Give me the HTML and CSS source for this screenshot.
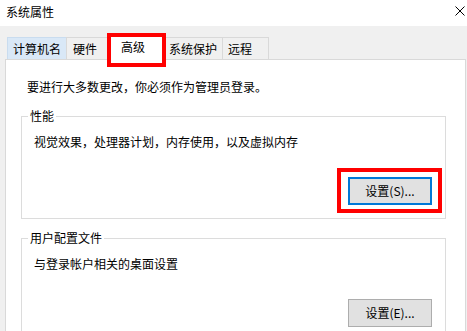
FILE: index.html
```html
<!DOCTYPE html>
<html lang="zh-CN">
<head>
<meta charset="utf-8">
<title>系统属性</title>
<link rel="stylesheet" href="styles.css">
</head>
<body>
<div class="window">
  <div class="titlebar">
    <span class="title">系统属性</span>
    <svg class="close" width="10" height="10" viewBox="0 0 10 10" aria-hidden="true">
      <path d="M0.5 0.5 L9.5 9.5 M9.5 0.5 L0.5 9.5" stroke="#000" stroke-width="1" fill="none"/>
    </svg>
  </div>
  <div class="dialog">
    <div class="tabs">
      <div class="tab tab-hover t1">计算机名</div>
      <div class="tab t2">硬件</div>
      <div class="tab tab-active t3">高级</div>
      <div class="tab t4">系统保护</div>
      <div class="tab t5">远程</div>
    </div>
    <div class="panel">
      <p class="note">要进行大多数更改，你必须作为管理员登录。</p>
      <fieldset class="group group-first">
        <legend>性能</legend>
        <p class="desc">视觉效果，处理器计划，内存使用，以及虚拟内存</p>
        <div class="actions">
          <button class="btn btn-focus btn-marked" type="button">设置(S)...</button>
        </div>
      </fieldset>
      <fieldset class="group">
        <legend>用户配置文件</legend>
        <p class="desc">与登录帐户相关的桌面设置</p>
        <div class="actions">
          <button class="btn" type="button">设置(E)...</button>
        </div>
      </fieldset>
    </div>
  </div>
</div>
</body>
</html>
```
FILE: styles.css
```css
* { box-sizing: border-box; }

html, body {
  margin: 0;
  padding: 0;
}

body {
  font-family: "Noto Sans CJK SC", "Noto Sans", sans-serif;
  font-size: 12px;
  line-height: 16px;
  color: #000;
  background: #f0f0f0;
}

.window {
  width: 467px;
  height: 331px;
  overflow: hidden;
  background: #f0f0f0;
}

.titlebar {
  height: 26px;
  background: #fff;
  display: flex;
  justify-content: space-between;
  align-items: flex-start;
  padding: 4px 2px 0 6px;
}

.title {
  line-height: 16px;
}

.close {
  display: block;
  margin-top: 2px;
}

.tabs {
  display: flex;
  align-items: flex-end;
  height: 33px;
  padding: 9px 0 0 7px;
}

.tab {
  height: 22px;
  display: flex;
  align-items: center;
  border: 1px solid #d9d9d9;
  border-bottom: none;
  background: #f0f0f0;
  white-space: nowrap;
  margin-left: -1px;
  position: relative;
}

.tab-hover {
  background: #d9e8f7;
  border-color: #c9dcef;
}

.tab-active {
  height: 25px;
  margin-bottom: -1px;
  margin-left: -2px;
  background: #fff;
  z-index: 2;
  padding-bottom: 3px;
}

.tab-active::after {
  content: "";
  position: absolute;
  top: -3px;
  left: -1px;
  right: -1px;
  bottom: -7px;
  border: 4px solid #f00;
}

.t1 { width: 60px; padding-left: 5px; margin-left: 0; }
.t2 { width: 43px; padding-left: 6px; }
.t3 { width: 59px; padding-left: 13px; }
.t4 { width: 58px; padding-left: 3px; }
.t5 { width: 47px; padding-left: 5px; }

.panel {
  margin-left: 5px;
  width: 461px;
  height: 300px;
  background: #fff;
  border: 1px solid #d9d9d9;
  padding: 19px 0 0 0;
  position: relative;
  z-index: 1;
}

.note {
  margin: 0;
  padding-left: 21px;
}

.group {
  margin: 13px 19px 0 15px;
  padding: 10px 13px 13px 6px;
  border: 1px solid #dcdcdc;
  min-width: 0;
}

.group + .group {
  margin-top: 11px;
}

.group legend {
  padding: 0 2px;
  line-height: 16px;
}

.desc {
  margin: 0 0 0 6px;
}

.actions {
  display: flex;
  justify-content: flex-end;
  margin-top: 27px;
}

.btn {
  width: 84px;
  height: 28px;
  font-family: inherit;
  font-size: 12px;
  line-height: 16px;
  color: #000;
  background: #e1e1e1;
  border: 1px solid #adadad;
  padding: 0;
  margin: 0;
  position: relative;
}

.btn-focus {
  border: 2px solid #0078d7;
}

.btn-marked::after {
  content: "";
  position: absolute;
  top: -11px;
  left: -13px;
  right: -12px;
  bottom: -10px;
  border: 4px solid #f00;
}
```
